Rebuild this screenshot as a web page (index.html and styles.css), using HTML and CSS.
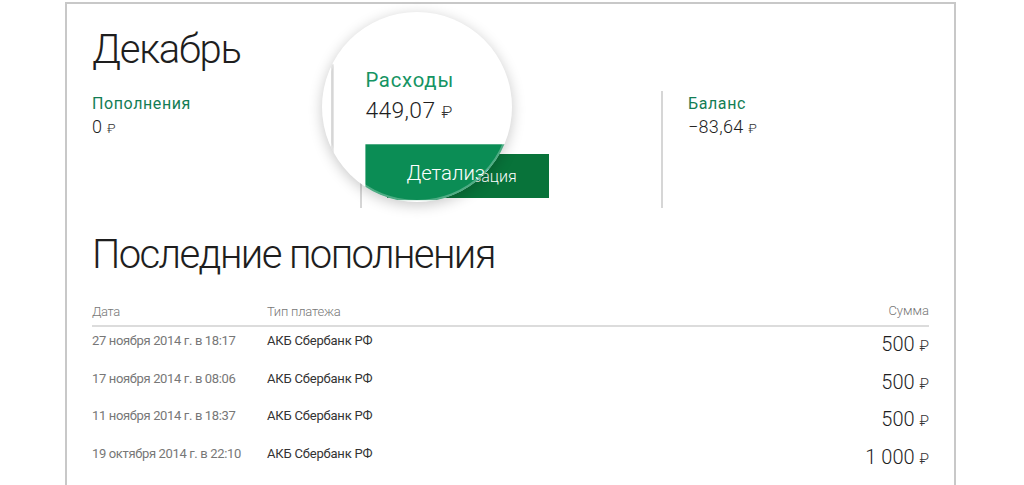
FILE: index.html
```html
<!DOCTYPE html>
<html lang="ru">
<head>
<meta charset="utf-8">
<title>Декабрь</title>
<link rel="stylesheet" href="styles.css">
</head>
<body>
<div class="card">
  <h1 class="title">Декабрь</h1>
  <div class="stats">
    <div class="stat stat-first">
      <div class="stat-label">Пополнения</div>
      <div class="stat-value">0 <span class="rub">₽</span></div>
    </div>
    <div class="stat">
      <div class="stat-label">Расходы</div>
      <div class="stat-value">449,07 <span class="rub">₽</span></div>
      <button class="btn">Детализация</button>
    </div>
    <div class="stat">
      <div class="stat-label">Баланс</div>
      <div class="stat-value">−83,64 <span class="rub">₽</span></div>
    </div>
  </div>

  <h2 class="section-title">Последние пополнения</h2>
  <div class="table">
    <div class="row head">
      <div class="c-date">Дата</div>
      <div class="c-type">Тип платежа</div>
      <div class="c-sum">Сумма</div>
    </div>
    <div class="row">
      <div class="c-date">27 ноября 2014 г. в 18:17</div>
      <div class="c-type">АКБ Сбербанк РФ</div>
      <div class="c-sum">500 <span class="rub">₽</span></div>
    </div>
    <div class="row">
      <div class="c-date">17 ноября 2014 г. в 08:06</div>
      <div class="c-type">АКБ Сбербанк РФ</div>
      <div class="c-sum">500 <span class="rub">₽</span></div>
    </div>
    <div class="row">
      <div class="c-date">11 ноября 2014 г. в 18:37</div>
      <div class="c-type">АКБ Сбербанк РФ</div>
      <div class="c-sum">500 <span class="rub">₽</span></div>
    </div>
    <div class="row">
      <div class="c-date">19 октября 2014 г. в 22:10</div>
      <div class="c-type">АКБ Сбербанк РФ</div>
      <div class="c-sum">1 000 <span class="rub">₽</span></div>
    </div>
  </div>
</div>

<div class="magnifier">
  <div class="mag-content">
    <div class="stat mag-stat">
      <div class="stat-label">Расходы</div>
      <div class="stat-value">449,07 <span class="rub">₽</span></div>
      <button class="btn">Детализация</button>
    </div>
  </div>
</div>
</body>
</html>
```

FILE: styles.css
```css
html, body {
  margin: 0;
  padding: 0;
  background: #fff;
  overflow: hidden;
}
body {
  font-family: Roboto, "Noto Sans", "DejaVu Sans", sans-serif;
  color: #222;
  position: relative;
  height: 485px;
}
.card {
  margin: 2px 0 0 65px;
  width: 891px;
  min-height: 600px;
  border: 2px solid #c8c8c8;
  border-bottom: none;
  padding: 22px 25px 0 25px;
  box-sizing: border-box;
}
.title {
  margin: 0;
  font-size: 40px;
  line-height: 48px;
  font-weight: 300;
  letter-spacing: -1.2px;
  color: #1e1e1e;
}
.stats {
  margin-top: 17px;
  display: grid;
  grid-template-columns: 268px 301px 1fr;
  height: 117px;
}
.stat {
  border-left: 2px solid #d6d6d6;
  padding: 3px 0 0 25px;
  box-sizing: border-box;
  height: 117px;
}
.stat-first {
  border-left: none;
  padding-left: 0;
}
.stat-label {
  font-size: 16px;
  line-height: 20px;
  letter-spacing: 0.6px;
  color: #137d55;
  font-weight: 400;
}
.stat-value {
  margin-top: 2px;
  font-size: 18px;
  line-height: 22px;
  font-weight: 300;
  letter-spacing: 0.3px;
  color: #1e1e1e;
}
.rub {
  font-size: 0.74em;
  color: #333;
}
.btn {
  display: block;
  margin-top: 14px;
  width: 162px;
  height: 44px;
  border: none;
  padding: 0;
  background: #08733a;
  color: #fff;
  font-family: inherit;
  font-size: 16px;
  font-weight: 300;
  cursor: pointer;
}
.section-title {
  margin: 23px 0 0 0;
  font-size: 40px;
  line-height: 48px;
  font-weight: 300;
  letter-spacing: -1.6px;
  color: #1e1e1e;
}
.table {
  margin-top: 25px;
}
.row {
  display: grid;
  grid-template-columns: 175px 1fr auto;
  align-items: start;
  height: 37.6px;
  padding-top: 6px;
  box-sizing: border-box;
}
.row.head {
  height: auto;
  padding: 0 0 5px 0;
  border-bottom: 2px solid #dcdcdc;
}
.row.head > div {
  font-size: 13px;
  line-height: 16px;
  color: #777;
  font-weight: 300;
}
.c-date {
  font-size: 13px;
  line-height: 16px;
  letter-spacing: -0.35px;
  color: #777;
}
.c-type {
  font-size: 13px;
  line-height: 16px;
  letter-spacing: -0.2px;
  color: #333;
}
.c-sum {
  font-size: 20px;
  line-height: 24px;
  font-weight: 300;
  color: #1e1e1e;
  text-align: right;
  margin-top: -1px;
}

/* magnifier lens */
.magnifier {
  position: absolute;
  left: 322px;
  top: 12px;
  width: 190px;
  height: 190px;
  border-radius: 50%;
  overflow: hidden;
  background: #fff;
  box-shadow: 0 3px 14px rgba(0, 0, 0, 0.22);
}
.magnifier::after {
  content: "";
  position: absolute;
  inset: 0;
  border-radius: 50%;
  border: 2px solid rgba(255, 255, 255, 0.28);
}
.mag-content {
  position: absolute;
  left: 38px;
  top: 79px;
  width: 301px;
  height: 117px;
  transform-origin: 107px 99px;
  transform: scale(1.27);
}
.mag-stat .stat-label {
  color: #159463;
}
.mag-stat .btn {
  background: #0b8d55;
}
```
